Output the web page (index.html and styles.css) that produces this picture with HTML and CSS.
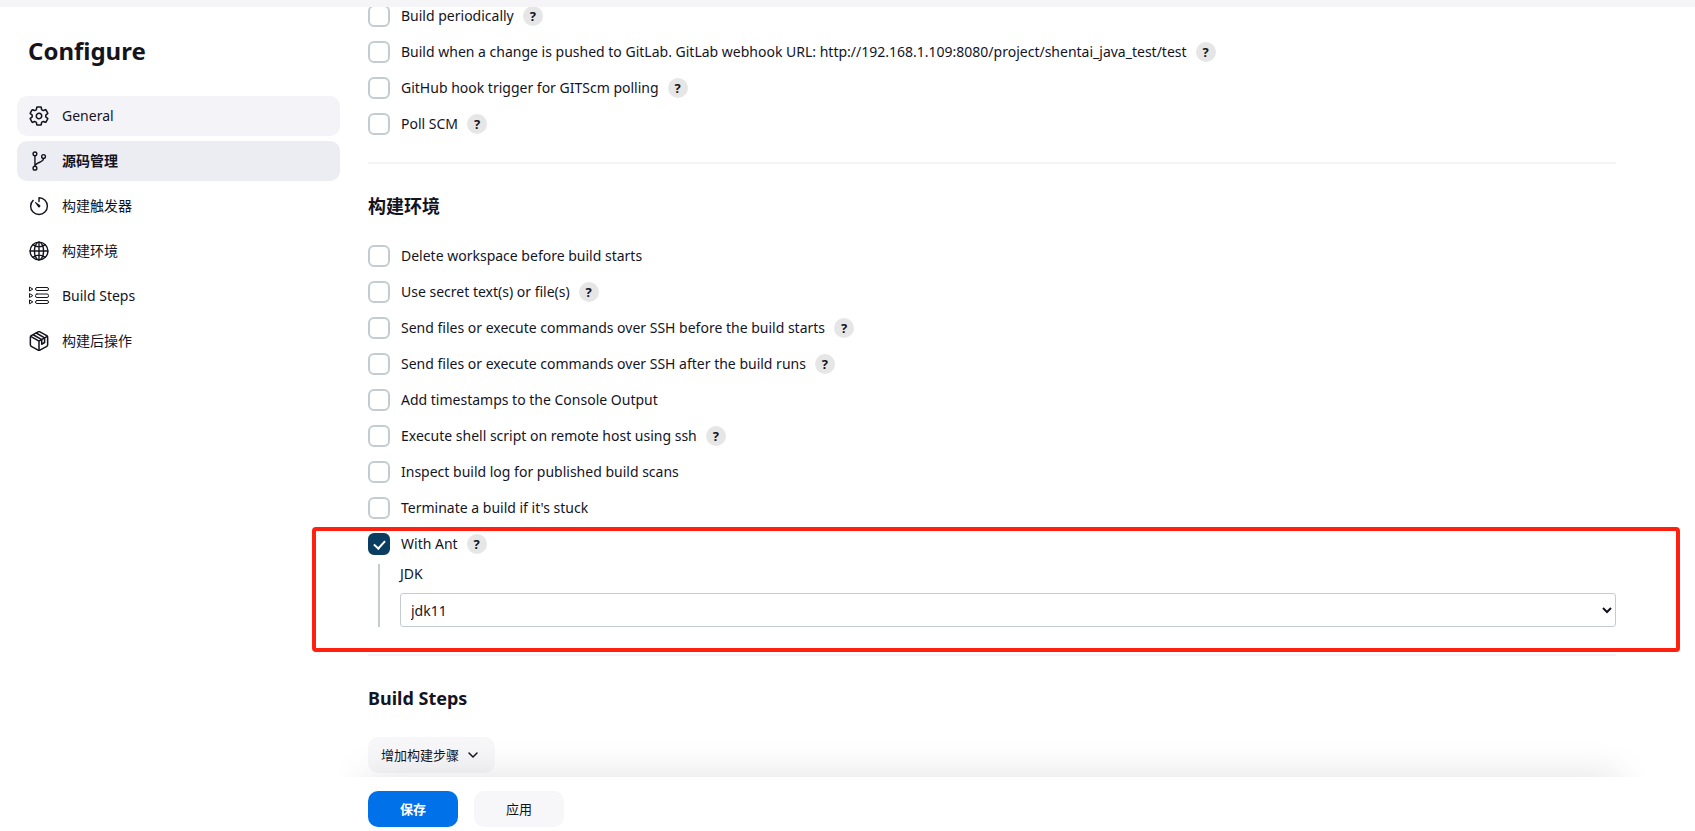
FILE: index.html
```
<!DOCTYPE html>
<html lang="zh-CN">
<head>
    <meta charset="UTF-8">
    <meta name="viewport" content="width=device-width, initial-scale=1.0">
    <title>Configure - Jenkins</title>
    <link rel="stylesheet" href="styles.css">
</head>
<body>
    <header class="top-bar"></header>

    <div class="page">
        <aside class="sidebar">
            <h1 class="page-title">Configure</h1>
            <nav class="tasks">
                <a href="#general" class="task hover">
                    <svg class="icon" viewBox="20 20 472 472"><path d="M262.29 192.31a64 64 0 1057.4 57.4 64.13 64.13 0 00-57.4-57.4zM416.39 256a154.34 154.34 0 01-1.53 20.79l45.21 35.46a10.81 10.81 0 012.45 13.75l-42.77 74a10.81 10.81 0 01-13.14 4.59l-44.9-18.08a16.11 16.11 0 00-15.17 1.75A164.48 164.48 0 01325 400.8a15.94 15.94 0 00-8.82 12.14l-6.73 47.89a11.08 11.08 0 01-10.68 9.17h-85.54a11.11 11.11 0 01-10.69-8.87l-6.72-47.82a16.07 16.07 0 00-9-12.22 155.3 155.3 0 01-21.46-12.57 16 16 0 00-15.11-1.71l-44.89 18.07a10.81 10.81 0 01-13.14-4.58l-42.77-74a10.8 10.8 0 012.45-13.75l38.21-30a16.05 16.05 0 006-14.08c-.36-4.17-.58-8.33-.58-12.5s.21-8.27.58-12.35a16 16 0 00-6.07-13.94l-38.19-30A10.81 10.81 0 0149.48 186l42.77-74a10.81 10.81 0 0113.14-4.59l44.9 18.08a16.11 16.11 0 0015.17-1.75A164.48 164.48 0 01187 111.2a15.94 15.94 0 008.82-12.14l6.73-47.89A11.08 11.08 0 01213.23 42h85.54a11.11 11.11 0 0110.69 8.87l6.72 47.82a16.07 16.07 0 009 12.22 155.3 155.3 0 0121.46 12.57 16 16 0 0015.11 1.71l44.89-18.07a10.81 10.81 0 0113.14 4.58l42.77 74a10.8 10.8 0 01-2.45 13.75l-38.21 30a16.05 16.05 0 00-6.05 14.08c.33 4.14.55 8.3.55 12.47z"/></svg>
                    General
                </a>
                <a href="#scm" class="task active">
                    <svg class="icon" viewBox="0 0 512 512"><circle cx="152" cy="72" r="48"/><circle cx="152" cy="440" r="48"/><circle cx="372" cy="140" r="48"/><path d="M152 392V120M372 188c0 128-212 84-220 204"/></svg>
                    源码管理
                </a>
                <a href="#triggers" class="task">
                    <svg class="icon" viewBox="0 0 512 512"><path d="M106 112A214 214 0 0042 260c-1 118 95 214 214 214 118 0 214-96 214-214 0-117-93-212-214-214V140"/><path class="solid" d="M233.38 278.63l-79-113a8.13 8.13 0 0111.32-11.32l113 79a32.5 32.5 0 01-37.25 53.26 33.21 33.21 0 01-8.07-7.94z"/></svg>
                    构建触发器
                </a>
                <a href="#environment" class="task">
                    <svg class="icon" viewBox="0 0 512 512"><circle cx="256" cy="256" r="228"/><ellipse cx="256" cy="256" rx="116" ry="228"/><path d="M104 100c42 32 94 50 152 50s110-18 152-50M408 412c-42-32-94-50-152-50s-110 18-152 50M256 28v456M484 256H28"/></svg>
                    构建环境
                </a>
                <a href="#build-steps" class="task">
                    <svg class="icon thin" viewBox="0 0 20 20"><rect x="6.500" y="1.500" width="13" height="3" rx="1.500"/><rect x="6.500" y="8" width="13" height="3.500" rx="1.500"/><rect x="6.500" y="14.500" width="13" height="3" rx="1.500"/><path d="M.5 1.500v3.500l3-1.700zM.5 8v3.500l3-1.700zM.5 14.300v3.500l3-1.700z"/></svg>
                    Build Steps
                </a>
                <a href="#post-build" class="task">
                    <svg class="icon" viewBox="20 20 472 472"><path d="M460 345V167a42 42 0 00-21-36L277 39a42 42 0 00-42 0L73 131a42 42 0 00-21 36v178a42 42 0 0021 36l162 92a42 42 0 0042 0l162-92a42 42 0 0021-36z"/><path d="M60 146l196 112 196-112M256 476V258M120 108l200 114v110l68-40V182L190 68"/></svg>
                    构建后操作
                </a>
            </nav>
        </aside>

        <main class="config">
            <form>
                <section class="section" id="triggers">
                    <div class="options">
                        <div class="option">
                            <input type="checkbox" id="periodically">
                            <label for="periodically">Build periodically</label>
                            <button type="button" class="help">?</button>
                        </div>
                        <div class="option">
                            <input type="checkbox" id="gitlab">
                            <label for="gitlab">Build when a change is pushed to GitLab. GitLab webhook URL: http://192.168.1.109:8080/project/shentai_java_test/test</label>
                            <button type="button" class="help">?</button>
                        </div>
                        <div class="option">
                            <input type="checkbox" id="github">
                            <label for="github">GitHub hook trigger for GITScm polling</label>
                            <button type="button" class="help">?</button>
                        </div>
                        <div class="option">
                            <input type="checkbox" id="poll">
                            <label for="poll">Poll SCM</label>
                            <button type="button" class="help">?</button>
                        </div>
                    </div>
                </section>

                <section class="section" id="environment">
                    <h2 class="section-title">构建环境</h2>
                    <div class="options">
                        <div class="option">
                            <input type="checkbox" id="delete-ws">
                            <label for="delete-ws">Delete workspace before build starts</label>
                        </div>
                        <div class="option">
                            <input type="checkbox" id="secrets">
                            <label for="secrets">Use secret text(s) or file(s)</label>
                            <button type="button" class="help">?</button>
                        </div>
                        <div class="option">
                            <input type="checkbox" id="ssh-before">
                            <label for="ssh-before">Send files or execute commands over SSH before the build starts</label>
                            <button type="button" class="help">?</button>
                        </div>
                        <div class="option">
                            <input type="checkbox" id="ssh-after">
                            <label for="ssh-after">Send files or execute commands over SSH after the build runs</label>
                            <button type="button" class="help">?</button>
                        </div>
                        <div class="option">
                            <input type="checkbox" id="timestamps">
                            <label for="timestamps">Add timestamps to the Console Output</label>
                        </div>
                        <div class="option">
                            <input type="checkbox" id="remote-shell">
                            <label for="remote-shell">Execute shell script on remote host using ssh</label>
                            <button type="button" class="help">?</button>
                        </div>
                        <div class="option">
                            <input type="checkbox" id="scans">
                            <label for="scans">Inspect build log for published build scans</label>
                        </div>
                        <div class="option">
                            <input type="checkbox" id="stuck">
                            <label for="stuck">Terminate a build if it's stuck</label>
                        </div>
                        <div class="ant">
                            <div class="option">
                                <input type="checkbox" id="with-ant" checked>
                                <label for="with-ant">With Ant</label>
                                <button type="button" class="help">?</button>
                            </div>
                            <div class="nested">
                                <label for="jdk">JDK</label>
                                <select id="jdk">
                                    <option>jdk11</option>
                                </select>
                            </div>
                            <div class="highlight"></div>
                        </div>
                    </div>
                </section>

                <section class="section last" id="build-steps">
                    <h2 class="section-title">Build Steps</h2>
                    <button type="button" class="btn add-step">
                        增加构建步骤
                        <svg class="chevron" viewBox="0 0 12 12"><path d="M2 4l4 4 4-4"/></svg>
                    </button>
                </section>

                <div class="bottom-bar">
                    <button type="submit" class="btn primary">保存</button>
                    <button type="button" class="btn">应用</button>
                </div>
            </form>
        </main>
    </div>
</body>
</html>
```
FILE: styles.css
```
* {
    box-sizing: border-box;
}

body {
    margin: 0;
    background: #fff;
    color: #14141f;
    font-family: "Noto Sans", "Noto Sans CJK SC", sans-serif;
    font-size: 14px;
    line-height: 20px;
}

button, select, input {
    font: inherit;
    color: inherit;
    margin: 0;
}

.top-bar {
    position: fixed;
    top: 0;
    left: 0;
    right: 0;
    height: 7px;
    background: #f5f5f8;
    z-index: 10;
}

.page {
    display: grid;
    grid-template-columns: 323px minmax(0, 1fr);
    gap: 28px;
    padding: 0 79px 0 17px;
}

/* Sidebar */
.sidebar {
    position: sticky;
    top: 0;
    align-self: start;
    padding-top: 35px;
}

.page-title {
    margin: 0 0 29px;
    padding-left: 11px;
    font-size: 24px;
    line-height: 32px;
    font-weight: bold;
}

.tasks {
    display: flex;
    flex-direction: column;
    gap: 5px;
}

.task {
    display: flex;
    align-items: center;
    gap: 13px;
    height: 40px;
    padding: 0 12px;
    border-radius: 10px;
    color: inherit;
    text-decoration: none;
}

.task.hover, .task:hover {
    background: #f3f3f8;
}

.task.active {
    background: #ecedf3;
    font-weight: bold;
}

.icon {
    width: 20px;
    height: 20px;
    fill: none;
    stroke: currentColor;
    stroke-width: 36;
    stroke-linecap: round;
    stroke-linejoin: round;
}

.icon.thin {
    stroke-width: 1;
}

.icon .solid {
    fill: currentColor;
    stroke: none;
}

/* Config form */
.config {
    padding-top: 5px;
}

.section {
    padding-bottom: 27px;
    border-bottom: 2px solid #f3f3f8;
}

.section.last {
    padding-bottom: 4px;
    border-bottom: none;
}

.section-title {
    margin: 0;
    padding: 30px 0 27px;
    font-size: 18px;
    line-height: 24px;
    font-weight: bold;
}

.options {
    display: flex;
    flex-direction: column;
    gap: 14px;
}

.option {
    display: flex;
    align-items: center;
    height: 22px;
}

.option input {
    appearance: none;
    display: grid;
    place-items: center;
    flex: none;
    width: 22px;
    height: 22px;
    margin-right: 11px;
    border: 2px solid #c3ccd1;
    border-radius: 6px;
    background: #fff;
}

.option input:checked {
    border-color: #0b3d60;
    background: #0b3d60;
}

.option input:checked::before {
    content: "";
    width: 5px;
    height: 9px;
    margin-bottom: 2px;
    border: solid #fff;
    border-width: 0 2px 2px 0;
    transform: rotate(42deg);
}

.help {
    width: 20px;
    height: 20px;
    margin-left: 9px;
    padding: 0;
    border: none;
    border-radius: 50%;
    background: #e6e6e6;
    font-size: 13px;
    font-weight: bold;
    line-height: 20px;
}

.ant {
    position: relative;
}

.nested {
    display: flex;
    flex-direction: column;
    gap: 9px;
    margin: 9px 0 0 10px;
    padding-left: 20px;
    border-left: 2px solid #c3ccd1;
}

.nested select {
    width: 100%;
    height: 34px;
    padding: 0 6px;
    border: 1px solid #c3ccd1;
    border-radius: 3px;
    background: #fff;
}

/* Red frame around the Ant settings */
.highlight {
    position: absolute;
    inset: -6px -64px -25px -56px;
    border: 4px solid #ff2010;
    border-radius: 4px;
    pointer-events: none;
}

/* Buttons */
.btn {
    min-width: 90px;
    height: 36px;
    padding: 0 13px;
    border: none;
    border-radius: 10px;
    background: #f7f7fa;
    font-size: 13px;
    cursor: pointer;
}

.btn.primary {
    background: #0071e9;
    color: #fff;
    font-weight: bold;
}

.add-step {
    display: flex;
    align-items: center;
    gap: 8px;
    padding-right: 16px;
}

.chevron {
    width: 12px;
    height: 12px;
    fill: none;
    stroke: currentColor;
    stroke-width: 1.5;
    stroke-linecap: round;
    stroke-linejoin: round;
}

.bottom-bar {
    position: sticky;
    bottom: 0;
    display: flex;
    gap: 16px;
    padding: 14px 0 4px;
    background: #fff;
}

/* Shadow only shows above the bar */
.bottom-bar::before {
    content: "";
    position: absolute;
    inset: 0;
    box-shadow: 0 0 36px 4px rgba(0, 0, 0, 0.1);
    clip-path: inset(-40px -40px 100% -40px);
    pointer-events: none;
}
```
